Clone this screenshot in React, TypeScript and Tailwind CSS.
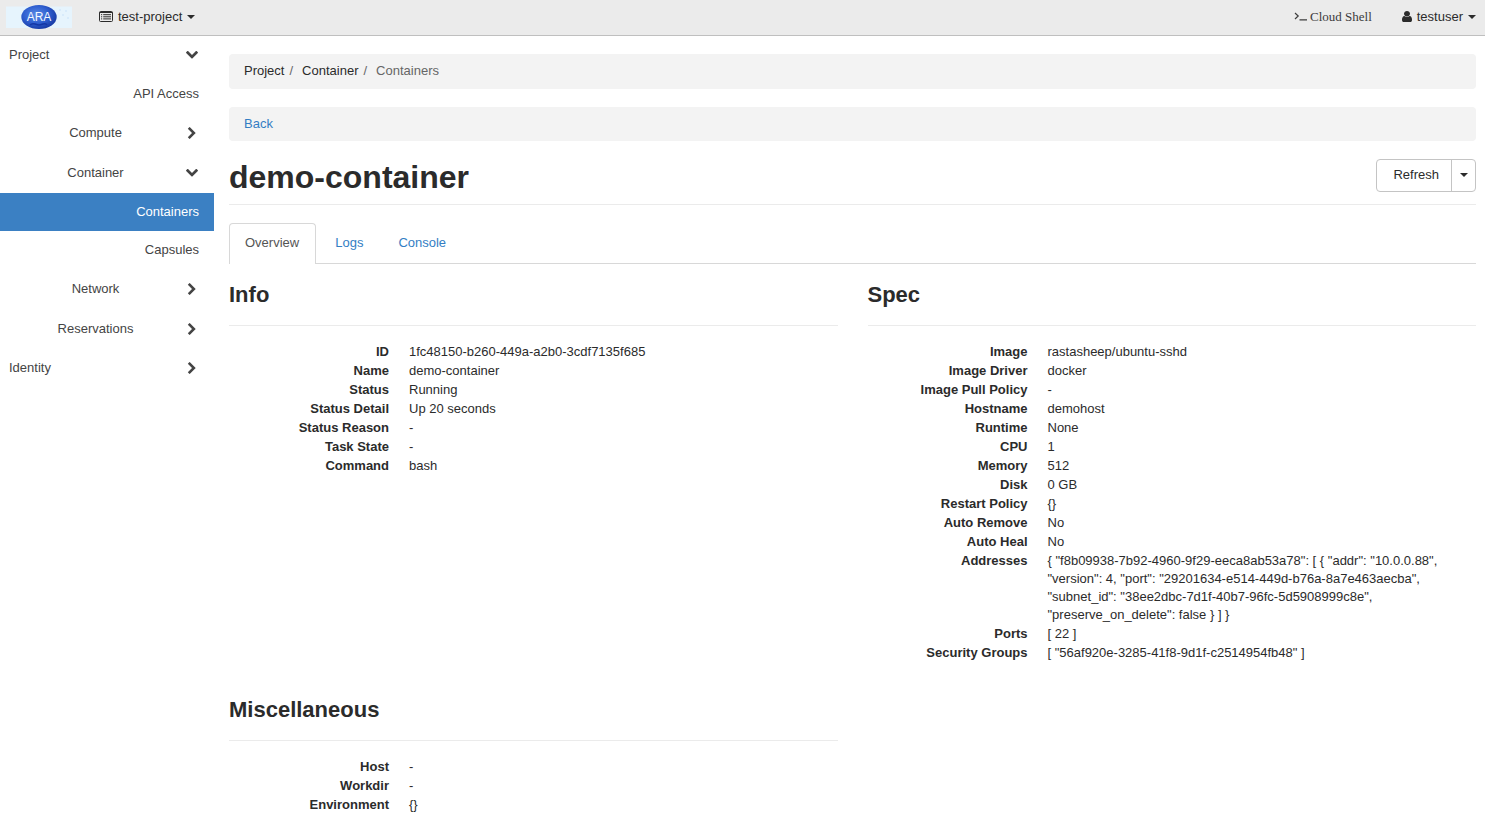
type Detail = [label: string, value: string];

const info: Detail[] = [
  ["ID", "1fc48150-b260-449a-a2b0-3cdf7135f685"],
  ["Name", "demo-container"],
  ["Status", "Running"],
  ["Status Detail", "Up 20 seconds"],
  ["Status Reason", "-"],
  ["Task State", "-"],
  ["Command", "bash"],
];

const spec: Detail[] = [
  ["Image", "rastasheep/ubuntu-sshd"],
  ["Image Driver", "docker"],
  ["Image Pull Policy", "-"],
  ["Hostname", "demohost"],
  ["Runtime", "None"],
  ["CPU", "1"],
  ["Memory", "512"],
  ["Disk", "0 GB"],
  ["Restart Policy", "{}"],
  ["Auto Remove", "No"],
  ["Auto Heal", "No"],
  [
    "Addresses",
    '{ "f8b09938-7b92-4960-9f29-eeca8ab53a78": [ { "addr": "10.0.0.88", "version": 4, "port": "29201634-e514-449d-b76a-8a7e463aecba", "subnet_id": "38ee2dbc-7d1f-40b7-96fc-5d5908999c8e", "preserve_on_delete": false } ] }',
  ],
  ["Ports", "[ 22 ]"],
  ["Security Groups", '[ "56af920e-3285-41f8-9d1f-c2514954fb48" ]'],
];

const misc: Detail[] = [
  ["Host", "-"],
  ["Workdir", "-"],
  ["Environment", "{}"],
];

function Chevron({ open }: { open: boolean }) {
  return (
    <span className="flex w-3.5 shrink-0 justify-center">
      <svg
        viewBox="0 -192 1280 1612"
        className={open ? "h-3 w-2.5 rotate-90" : "h-3 w-2.5"}
        fill="currentColor"
        aria-hidden="true"
      >
        <path d="M1107 659l-742 742q-19 19-45 19t-45-19l-166-166q-19-19-19-45t19-45l531-531-531-531q-19-19-19-45t19-45l166-166q19-19 45-19t45 19l742 742q19 19 19 45t-19 45z" />
      </svg>
    </span>
  );
}

function Caret() {
  return (
    <svg viewBox="0 0 8 4" className="h-1 w-2 shrink-0" fill="currentColor" aria-hidden="true">
      <path d="M0 0h8L4 4z" />
    </svg>
  );
}

function ListIcon() {
  return (
    <svg viewBox="0 0 14 11" className="h-[11px] w-3.5 shrink-0" aria-hidden="true">
      <rect x="0.5" y="0.5" width="13" height="10" rx="1" fill="none" stroke="currentColor" />
      <path d="M0.5 1.5h13" stroke="currentColor" />
      <path d="M2 3.7h1.2M2 5.8h1.2M2 7.9h1.2M4.2 3.7h7.8M4.2 5.8h7.8M4.2 7.9h7.8" stroke="currentColor" />
    </svg>
  );
}

function UserIcon() {
  return (
    <svg viewBox="0 128 1280 1536" className="h-[11px] w-[10px] shrink-0" fill="currentColor" preserveAspectRatio="none" aria-hidden="true">
      <path d="M1280 1399q0 109-62.5 187t-150.5 78h-854q-88 0-150.5-78t-62.5-187q0-85 8.5-160.5t31.5-152 58.5-131 94-89 134.5-34.5q131 128 313 128t313-128q76 0 134.5 34.5t94 89 58.5 131 31.5 152 8.5 160.5zm-256-887q0 159-112.5 271.5t-271.5 112.5-271.5-112.5-112.5-271.5 112.5-271.5 271.5-112.5 271.5 112.5 112.5 271.5z" />
    </svg>
  );
}

function Logo() {
  return (
    <svg viewBox="0 0 66 24" className="h-6 w-[66px]" role="img" aria-label="ARA">
      <defs>
        <radialGradient id="globe" cx="0.42" cy="0.4" r="0.65">
          <stop offset="0" stopColor="#5b8be6" />
          <stop offset="0.55" stopColor="#2f5fd0" />
          <stop offset="1" stopColor="#1536a0" />
        </radialGradient>
      </defs>
      <rect y="1.5" width="66" height="21.5" fill="#e6f4fd" />
      <g fill="#d3e9fa">
        <circle cx="54" cy="5" r="1" />
        <circle cx="60" cy="6" r="1" />
        <circle cx="57" cy="10" r="1" />
        <circle cx="62" cy="13" r="1" />
      </g>
      <ellipse cx="33" cy="12" rx="17.7" ry="12" fill="url(#globe)" />
      <path d="M24 20q2-2 5-1t4 1 4-1 4 1" fill="none" stroke="#1537a5" strokeWidth="1.5" />
      <text
        x="33"
        y="16.3"
        textAnchor="middle"
        fontFamily="Liberation Sans, sans-serif"
        fontSize="12"
        fill="#f4f8ff"
      >
        ARA
      </text>
    </svg>
  );
}

function TopBar() {
  return (
    <header className="flex h-9 items-center border-b border-[#bfbfbf] bg-[#ebebeb] pr-[9px] pb-0.5 pl-1.5">
      <a href="#home" className="flex">
        <Logo />
      </a>
      <button type="button" className="ml-[27px] flex items-center gap-[5px]">
        <ListIcon />
        <span>test-project</span>
        <Caret />
      </button>
      <a href="#shell" className="ml-auto flex items-center gap-0.5 font-['Liberation_Serif',serif] text-[#3c3c3c]">
        <svg viewBox="0 0 14 9" className="h-[9px] w-3.5" fill="none" stroke="currentColor" strokeWidth="1.2" aria-hidden="true">
          <path d="M1 1l3.2 3L1 7M5.5 7.9h7.5" />
        </svg>
        Cloud Shell
      </a>
      <button type="button" className="ml-[30px] flex items-center gap-[5px]">
        <UserIcon />
        <span>testuser</span>
        <Caret />
      </button>
    </header>
  );
}

function RootItem({ label, open = false }: { label: string; open?: boolean }) {
  return (
    <button
      type="button"
      aria-expanded={open}
      className="flex h-[39px] w-full items-center justify-between pr-[15px] pb-0.5 pl-[9px]"
    >
      <span>{label}</span>
      <Chevron open={open} />
    </button>
  );
}

function GroupItem({ label, open = false }: { label: string; open?: boolean }) {
  return (
    <button type="button" aria-expanded={open} className="flex h-10 w-full items-center gap-1 pr-[15px] pl-2.5">
      <span className="flex-1 text-center">{label}</span>
      <Chevron open={open} />
    </button>
  );
}

function LeafItem({ label, active = false }: { label: string; active?: boolean }) {
  return (
    <a
      href="#panel"
      aria-current={active ? "page" : undefined}
      className={
        active
          ? "flex h-[38px] items-center justify-end bg-[#3b80c3] pr-[15px] text-white"
          : "flex h-[38px] items-center justify-end pr-[15px]"
      }
    >
      {label}
    </a>
  );
}

function Sidebar() {
  return (
    <nav className="w-[214px] shrink-0 text-[#444]">
      <RootItem label="Project" open />
      <LeafItem label="API Access" />
      <GroupItem label="Compute" />
      <GroupItem label="Container" open />
      <LeafItem label="Containers" active />
      <LeafItem label="Capsules" />
      <GroupItem label="Network" />
      <GroupItem label="Reservations" />
      <RootItem label="Identity" />
    </nav>
  );
}

function Section({ title, rows }: { title: string; rows: Detail[] }) {
  return (
    <section>
      <h2 className="text-[22px] leading-6 font-bold">{title}</h2>
      <hr className="mt-[18px] mb-[17px] border-[#ebebeb]" />
      <dl className="flex flex-col gap-px">
        {rows.map(([label, value]) => (
          <div key={label} className="flex gap-5">
            <dt className="w-40 shrink-0 text-right font-bold">{label}</dt>
            <dd className="min-w-0">{value}</dd>
          </div>
        ))}
      </dl>
    </section>
  );
}

export default function App() {
  return (
    <div className="bg-white font-['Liberation_Sans',Arial,sans-serif] text-[13px] leading-[18px] text-[#2b2b2b]">
      <TopBar />
      <div className="flex">
        <Sidebar />
        <main className="min-w-0 flex-1 pt-[18px] pr-[9px] pl-[15px]">
          <nav aria-label="Breadcrumb" className="rounded bg-[#f3f3f3] px-[15px] pt-2 pb-[9px]">
            <ol className="flex">
              <li>
                <a href="#project">Project</a>
                <span className="px-[5px] text-[#666]">/</span>
              </li>
              <li className="ml-1">
                <a href="#container">Container</a>
                <span className="px-[5px] text-[#666]">/</span>
              </li>
              <li className="ml-1 text-[#666]">Containers</li>
            </ol>
          </nav>
          <div className="mt-[18px] rounded bg-[#f3f3f3] px-[15px] py-2">
            <a href="#back" className="text-[#337ec4]">
              Back
            </a>
          </div>

          <div className="mt-[18px] flex items-start justify-between border-b border-[#ebebeb] pb-[9px]">
            <h1 className="text-[32px] leading-9 font-bold">demo-container</h1>
            <div className="flex h-[33px] rounded border border-[#c4c4c4]">
              <button type="button" className="pr-3 pb-0.5 pl-4">
                Refresh
              </button>
              <button
                type="button"
                aria-label="More actions"
                className="flex w-6 items-center justify-center border-l border-[#c4c4c4] pb-0.5"
              >
                <Caret />
              </button>
            </div>
          </div>

          <div role="tablist" className="mt-[18px] flex gap-[3px] border-b border-[#d8d8d8]">
            <button
              type="button"
              role="tab"
              aria-selected="true"
              className="-mb-px h-[41px] rounded-t border border-b-0 border-[#d8d8d8] bg-white pr-4 pb-0.5 pl-[15px] text-[#555]"
            >
              Overview
            </button>
            <button type="button" role="tab" aria-selected="false" className="h-10 px-4 text-[#337ec4]">
              Logs
            </button>
            <button type="button" role="tab" aria-selected="false" className="h-10 px-4 text-[#337ec4]">
              Console
            </button>
          </div>

          <div className="mt-[19px] grid grid-cols-2 gap-x-[30px] gap-y-9">
            <Section title="Info" rows={info} />
            <Section title="Spec" rows={spec} />
            <Section title="Miscellaneous" rows={misc} />
          </div>
        </main>
      </div>
    </div>
  );
}
